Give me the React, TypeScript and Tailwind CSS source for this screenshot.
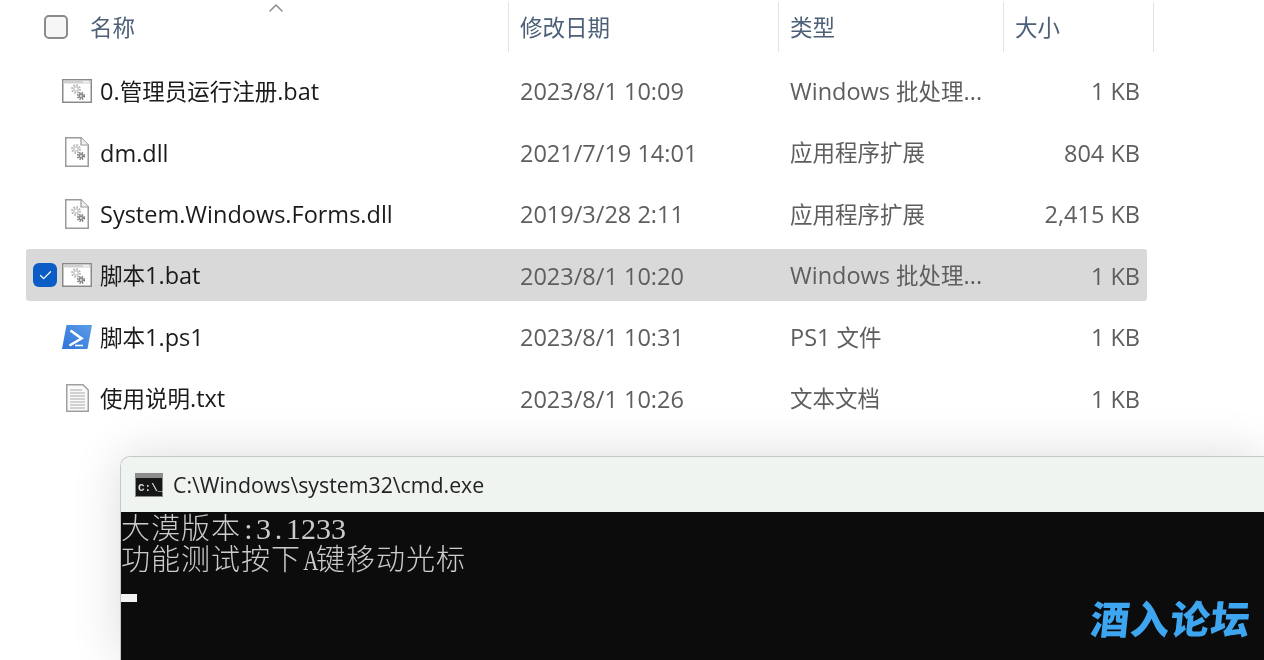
import React from 'react';
import { Check, ChevronUp } from 'lucide-react';

const uiFont = { fontFamily: '"Open Sans", "Noto Sans CJK SC", sans-serif' };

// latin runs are a bit wider than the cjk ones in the screenshot, so cjk gets its own size
const Mixed = ({ text }: { text: string }) => (
  <>
    {text.split(/([\u4e00-\u9fff]+)/).map((part, i) =>
      /[\u4e00-\u9fff]/.test(part) ? <span key={i} className="text-[22.5px]">{part}</span> : <span key={i}>{part}</span>
    )}
  </>
);

// two small gears used on the bat and dll file icons
const Gears = ({ x, y }: { x: number; y: number }) => (
  <g transform={`translate(${x} ${y})`}>
    <circle cx="5" cy="5" r="3.6" fill="none" stroke="#b4b4b4" strokeWidth="2.6" strokeDasharray="1.5 1.3" />
    <circle cx="5" cy="5" r="3" fill="#d2d2d2" />
    <circle cx="5" cy="5" r="1.2" fill="#fff" />
    <circle cx="10" cy="12" r="3" fill="none" stroke="#7a7a7a" strokeWidth="2.2" strokeDasharray="1.3 1.1" />
    <circle cx="10" cy="12" r="2.4" fill="#8a8a8a" />
    <circle cx="10" cy="12" r="1" fill="#eee" />
  </g>
);

const BatIcon = () => (
  <svg width="30" height="24" viewBox="0 0 30 24">
    <rect x="0.75" y="0.75" width="28.5" height="22.5" fill="#fff" stroke="#8a8a8a" strokeWidth="1.5" />
    <rect x="1.5" y="1.5" width="27" height="3" fill="#d0d0d0" />
    <rect x="21" y="2.3" width="6" height="1.2" fill="#fff" />
    <Gears x={9} y={5} />
  </svg>
);

const DllIcon = () => (
  <svg width="24" height="30" viewBox="0 0 24 30">
    <path d="M0.75 0.75H16L23.25 8V29.25H0.75Z" fill="#fff" stroke="#9a9a9a" strokeWidth="1.5" />
    <path d="M16 0.75V8H23.25" fill="#f1f1f1" stroke="#9a9a9a" strokeWidth="1.2" />
    <Gears x={6} y={7} />
  </svg>
);

const PsIcon = () => (
  <svg width="30" height="24" viewBox="0 0 30 24">
    <defs>
      <linearGradient id="psFill" x1="0" y1="1" x2="1" y2="0">
        <stop offset="0" stopColor="#2f74d8" />
        <stop offset="1" stopColor="#5c9ce8" />
      </linearGradient>
    </defs>
    <path d="M4.5 0H30L25.5 24H0Z" fill="url(#psFill)" />
    <path d="M8.5 5.5L19.5 13.5L7.5 20.5" fill="none" stroke="#fff" strokeWidth="2.6" />
    <path d="M13 20.5H21" stroke="#fff" strokeWidth="1.6" />
  </svg>
);

const TxtIcon = () => (
  <svg width="23" height="28" viewBox="0 0 23 28">
    <path d="M0.75 0.75H17L22.25 6V27.25H0.75Z" fill="#fafafa" stroke="#a0a0a0" strokeWidth="1.5" />
    <path d="M4 6H16M4 9H19M4 12H19M4 15H19M4 18H19M4 21H19M4 24H19" stroke="#a9a9a9" strokeWidth="1" />
  </svg>
);

const files = [
  { name: '0.管理员运行注册.bat', date: '2023/8/1 10:09', type: 'Windows 批处理...', size: '1 KB', icon: <BatIcon /> },
  { name: 'dm.dll', date: '2021/7/19 14:01', type: '应用程序扩展', size: '804 KB', icon: <DllIcon /> },
  { name: 'System.Windows.Forms.dll', date: '2019/3/28 2:11', type: '应用程序扩展', size: '2,415 KB', icon: <DllIcon /> },
  { name: '脚本1.bat', date: '2023/8/1 10:20', type: 'Windows 批处理...', size: '1 KB', icon: <BatIcon />, selected: true },
  { name: '脚本1.ps1', date: '2023/8/1 10:31', type: 'PS1 文件', size: '1 KB', icon: <PsIcon /> },
  { name: '使用说明.txt', date: '2023/8/1 10:26', type: '文本文档', size: '1 KB', icon: <TxtIcon /> },
];

const CmdIcon = () => (
  <svg width="28" height="24" viewBox="0 0 28 24">
    <rect width="28" height="24" fill="#8c8c8c" />
    <rect x="1" y="5" width="26" height="18" fill="#161616" />
    <text x="3" y="18" fontSize="11" fontWeight="700" fill="#ddd" fontFamily="Liberation Mono, monospace">C:\_</text>
  </svg>
);

// console latin is half a cjk cell wide, each glyph sits in its own cell
const Half = ({ text, squeeze }: { text: string; squeeze?: boolean }) => (
  <span className="text-[30px]" style={{ fontFamily: '"Liberation Serif", serif' }}>
    {text.split('').map((c, i) => (
      <span key={i} className={`inline-block w-[15px] text-center tracking-normal ${squeeze ? 'scale-x-[0.7]' : ''}`}>{c}</span>
    ))}
  </span>
);

const App = () => {
  return (
    <div className="w-[1264px] h-[660px] bg-white overflow-hidden flex flex-col text-[23.5px] blur-[0.4px]" style={uiFont}>
      {/* column header */}
      <div className="relative flex h-[50px] mt-[2px] shrink-0 text-[#4d6078] text-[22.5px]">
        <ChevronUp className="absolute left-[264px] top-[-6px] text-[#8c8c8c]" size={24} strokeWidth={1.5} />
        <div className="w-[508px] flex items-center pl-[44px]">
          <span className="w-6 h-6 rounded-[5px] border-2 border-[#8b8b8b] bg-[#f6f6f6]" />
          <span className="ml-[22px] mt-[2px]">名称</span>
        </div>
        <div className="w-[270px] flex items-center pl-[11px] pt-[2px] border-l border-[#e3e3e3]">修改日期</div>
        <div className="w-[225px] flex items-center pl-[11px] pt-[2px] border-l border-[#e3e3e3]">类型</div>
        <div className="w-[151px] flex items-center pl-[11px] pt-[2px] border-x border-[#e3e3e3]">大小</div>
      </div>

      {/* file rows */}
      <div className="mt-[12.5px] mx-[26px] flex flex-col gap-[9.5px] w-[1121px] shrink-0">
        {files.map((f) => (
          <div key={f.name} className={`flex h-[52px] items-center rounded-[3px] leading-[32px] ${f.selected ? 'bg-[#d9d9d9]' : ''}`}>
            <div className="w-[482px] flex items-center pl-[7px]">
              <span className={`w-6 h-6 rounded-[6px] flex items-center justify-center ${f.selected ? 'bg-[#0b5cc5]' : ''}`}>
                {f.selected && <Check size={15} strokeWidth={2} className="text-white" />}
              </span>
              <span className="w-[30px] ml-[5px] flex justify-center">{f.icon}</span>
              <span className="ml-2 text-[#1b1b1b] whitespace-nowrap mt-[1px]"><Mixed text={f.name} /></span>
            </div>
            <div className="w-[270px] pl-3 text-[#5e5e5e] mt-[1px]">{f.date}</div>
            <div className="w-[225px] pl-3 text-[#5e5e5e] mt-[1px]"><Mixed text={f.type} /></div>
            <div className="w-[144px] pr-[7px] text-right text-[#5e5e5e] mt-[1px]">{f.size}</div>
          </div>
        ))}
      </div>

      {/* cmd window */}
      <div className="relative mt-[32px] ml-[120px] flex-1 flex flex-col rounded-tl-[10px] border-t border-l border-[#c4c8c6] shadow-[0_0_50px_rgba(0,0,0,0.14)]">
        <div className="h-[55px] shrink-0 bg-[#f0f4f1] rounded-tl-[10px] flex items-center pl-[14px] text-[21.3px] text-[#222]">
          <CmdIcon />
          <span className="ml-[10px] mt-[1px]">C:\Windows\system32\cmd.exe</span>
        </div>
        <div className="flex-1 bg-[#0c0c0c] text-[#cccccc] text-[29px] font-light" style={{ fontFamily: '"Noto Sans CJK SC", serif' }}>
          <div className="h-[31px] leading-[29px] tracking-[1px] whitespace-nowrap">大漠版本<Half text=":3.1233" /></div>
          <div className="h-[31px] leading-[29px] tracking-[1px] whitespace-nowrap">功能测试按下<Half text="A" squeeze />键移动光标</div>
          <div className="w-4 h-2 bg-[#f2f2f2] mt-[20px]" />
        </div>
        {/* watermark */}
        <div className="absolute right-[13px] bottom-[21px] -skew-x-6 text-[#3ea6f0] text-[39px] leading-[44px] font-black tracking-[1px]" style={{ fontFamily: '"Noto Sans CJK SC", sans-serif' }}>
          酒入论坛
        </div>
      </div>
    </div>
  );
};

export default App;
